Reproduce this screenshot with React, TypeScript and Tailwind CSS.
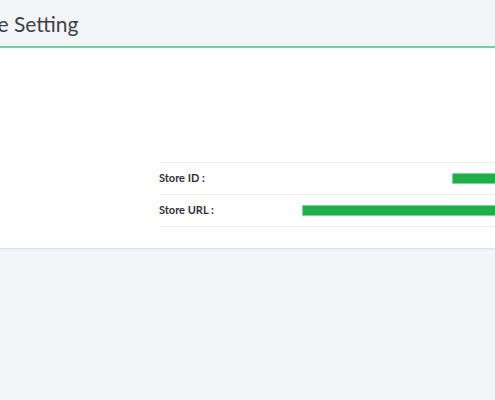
import React from 'react';

const rows = [
  { label: 'Store ID :', barStart: 'ml-[150px]' },
  { label: 'Store URL :', barStart: 'ml-0' },
];

export default function App() {
  return (
    <div className="min-h-[400px] w-[495px] overflow-hidden bg-[#f4f5f8]" style={{ fontFamily: '"Source Sans Pro", Lato, "Noto Sans", sans-serif' }}>
      <div className="h-[48px] flex items-center -ml-[40px] border-b-2 border-[#74d19d]">
        <h1 className="text-[21px] text-[#3d4148] leading-none">Store Setting</h1>
      </div>
      <div className="mt-[1px] h-[200px] bg-white border-b border-[#e1e3e8] shadow-[0_1px_2px_rgba(0,0,0,0.04)]">
        <div className="ml-[159px] pt-[113px]">
          <div className="border-t border-[#eceef1]">
            {rows.map((r) => (
              <div key={r.label} className="h-[32px] flex items-center border-b border-[#eceef1]">
                <span className="text-[11px] font-bold text-[#2e3238] w-[143px] shrink-0">{r.label}</span>
                <div className={`${r.barStart} -mr-[20px] flex-1 h-[11px] bg-[#22ad4a] border border-[#7fd49a]`} />
              </div>
            ))}
          </div>
        </div>
      </div>
    </div>
  );
}
